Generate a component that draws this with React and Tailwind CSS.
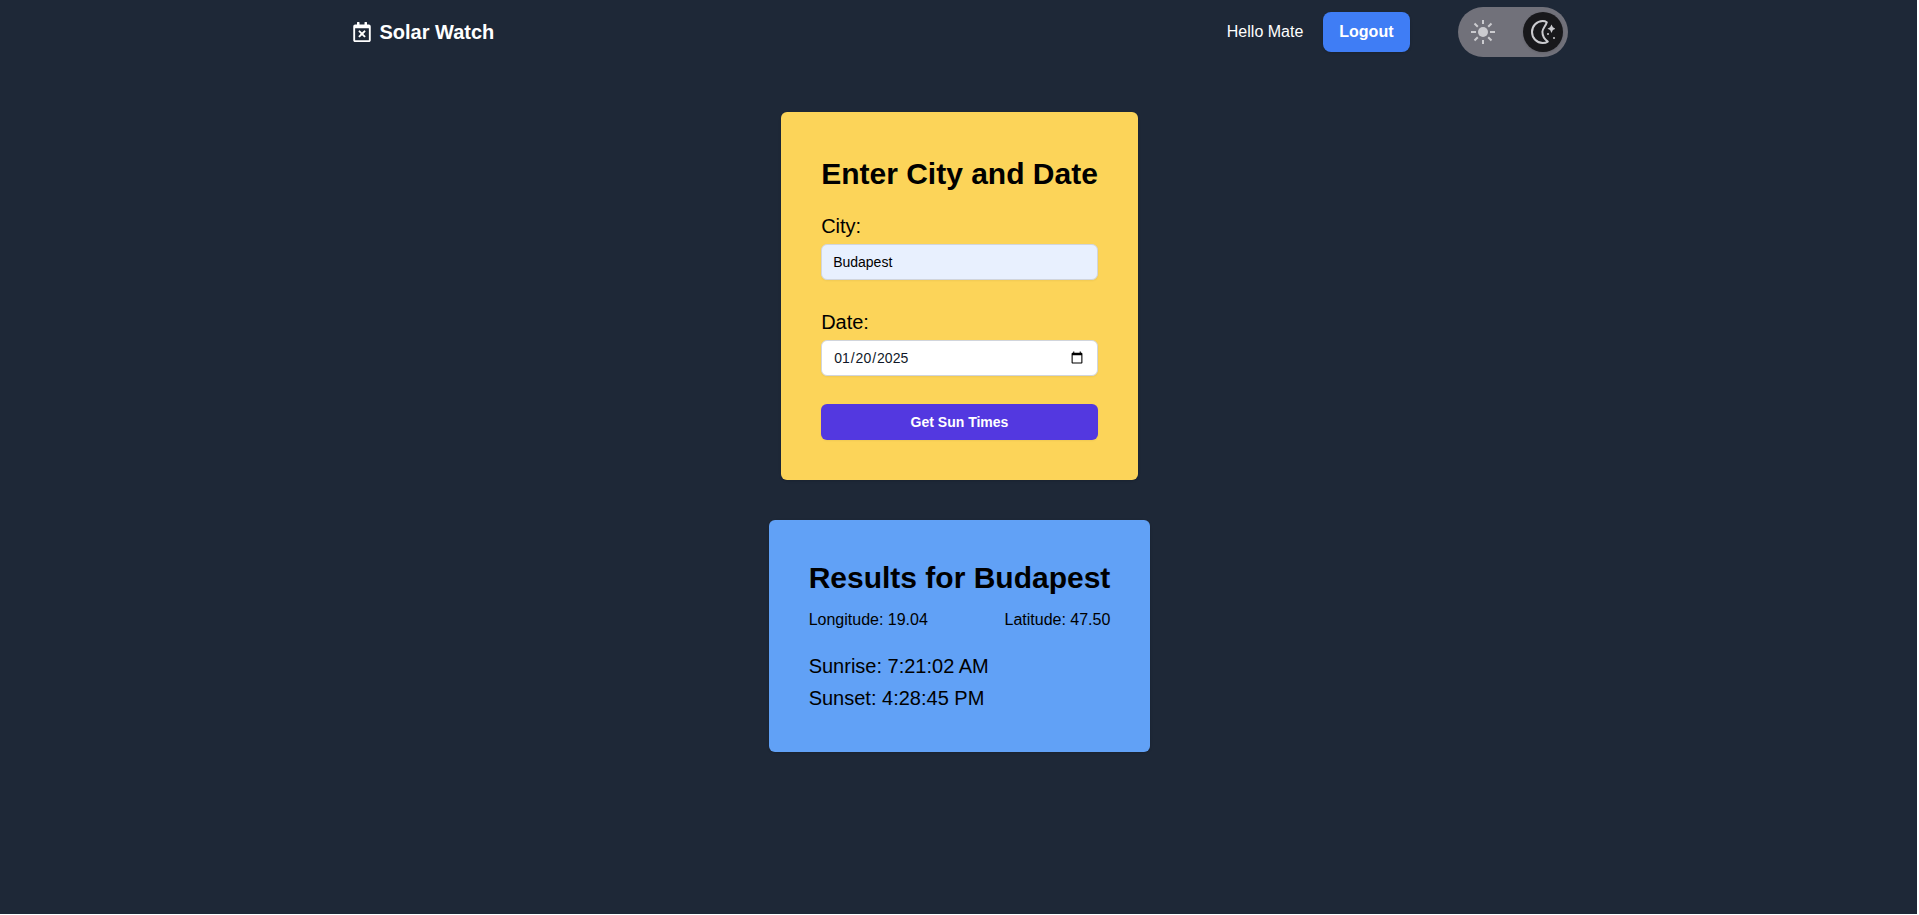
import { useState } from "react";
import { FaRegCalendarTimes } from "react-icons/fa";

function SunIcon() {
  return (
    <svg viewBox="0 0 24 24" className="size-6" fill="none" stroke="currentColor" strokeWidth="2" aria-hidden="true">
      <circle cx="12" cy="12" r="5" fill="currentColor" stroke="none" />
      <path d="M12 0v4M12 20v4M0 12h5M19 12h5M3.500 3.500l3.300 3.300M17.200 17.200l3.300 3.300M20.500 3.500l-3.300 3.300M6.800 17.200l-3.300 3.300" />
    </svg>
  );
}

function MoonIcon() {
  return (
    <svg viewBox="0 0 24 24" className="size-6" fill="currentColor" aria-hidden="true">
      <path
        d="M15.800 2.200C14.500 1.300 13 1 11.700 1C5.800 1 1 6 1 12s4.800 11 10.700 11c1.900 0 3.700-.5 5.100-1.400C13.800 19.500 11.400 16 11.400 11.800C11.400 8.500 14.800 6 15.800 2.200Z"
        fill="none"
        stroke="currentColor"
        strokeWidth="2"
        strokeLinejoin="round"
      />
      <path d="M20.500 4.500l1.400 2.800 2.600 1.400-2.600 1.400-1.400 2.800-1.400-2.800-2.600-1.400 2.600-1.400z" />
      <circle cx="17" cy="14" r="1" />
      <circle cx="23" cy="18" r="1" />
    </svg>
  );
}

function Navbar({ dark, onToggle }) {
  return (
    <header className="mx-auto flex h-16 w-full max-w-7xl items-center justify-between px-8">
      <a href="#home" className="flex items-center gap-2 text-xl font-bold text-white">
        <FaRegCalendarTimes className="size-5" aria-hidden="true" />
        Solar Watch
      </a>
      <div className="flex items-center">
        <span className="mr-5 text-white">Hello Mate</span>
        <button type="button" className="mr-12 rounded-lg bg-[#3f7df5] px-4 py-2 font-bold text-white shadow-sm">
          Logout
        </button>
        <button
          type="button"
          role="switch"
          aria-checked={dark}
          aria-label="Dark mode"
          onClick={onToggle}
          className="flex items-center rounded-full bg-[#71717a] p-[5px] text-[#cbcbcf]"
        >
          <span className="mr-5 flex size-10 items-center justify-center">
            <SunIcon />
          </span>
          <span className="flex size-10 items-center justify-center rounded-full bg-[#18181b] shadow">
            <MoonIcon />
          </span>
        </button>
      </div>
    </header>
  );
}

const fieldClass = "h-9 w-full rounded-md border border-gray-300 px-[11px] text-sm shadow-xs";

function SearchForm() {
  return (
    <form
      onSubmit={(e) => e.preventDefault()}
      className="flex flex-col gap-7 rounded-md bg-[#fcd459] p-10 text-black shadow-sm"
    >
      <div>
        <h1 className="mb-4 text-3xl leading-11 font-bold">Enter City and Date</h1>
        <label htmlFor="city" className="mb-1 block text-xl">City:</label>
        <input id="city" type="text" defaultValue="Budapest" className={`${fieldClass} bg-[#e8f0fe]`} />
      </div>
      <div>
        <label htmlFor="date" className="mb-1 block text-xl">Date:</label>
        <input
          id="date"
          type="date"
          defaultValue="2025-01-20"
          className={`${fieldClass} bg-white text-gray-900`}
        />
      </div>
      <button type="submit" className="h-9 rounded-md bg-[#5338e0] text-sm font-bold text-white shadow-xs">
        Get Sun Times
      </button>
    </form>
  );
}

function Results() {
  return (
    <section className="rounded-md bg-[#61a1f6] p-10 text-black shadow-sm">
      <h2 className="mb-3 text-3xl font-bold">Results for Budapest</h2>
      <div className="mb-5 flex justify-between">
        <p>Longitude: 19.04</p>
        <p>Latitude: 47.50</p>
      </div>
      <p className="mb-1 text-xl">Sunrise: 7:21:02 AM</p>
      <p className="text-xl">Sunset: 4:28:45 PM</p>
    </section>
  );
}

export default function App() {
  const [dark, setDark] = useState(true);
  return (
    <div className="min-h-screen bg-[#1e2837] font-['Liberation_Sans',Arial,sans-serif] shadow-[inset_-2px_-1px_0_#ffffff]">
      <Navbar dark={dark} onToggle={() => setDark(!dark)} />
      <main className="flex flex-col items-center gap-10 py-12">
        <SearchForm />
        <Results />
      </main>
    </div>
  );
}
